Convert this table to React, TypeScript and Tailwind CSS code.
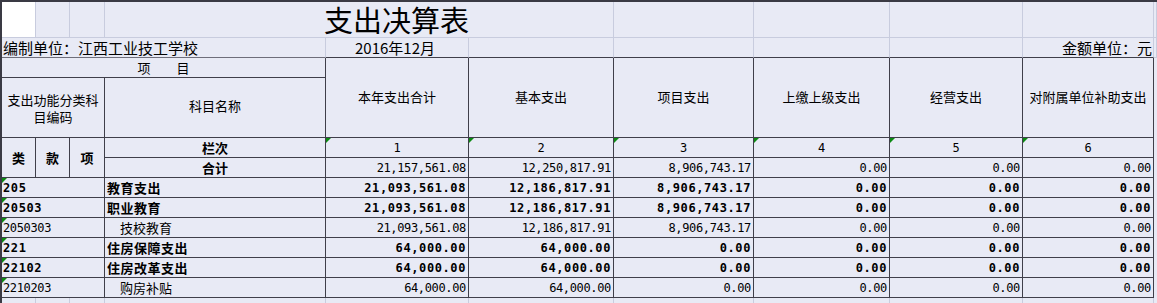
const cjk = "font-['Noto_Sans_CJK_SC',sans-serif]";
const num = "font-['DejaVu_Sans_Mono',monospace] text-[12px] leading-none";

const D = 'border-[#3f3f4a]';
const L = 'border-[#c8ccde]';

const valCols = ['col-start-5', 'col-start-6', 'col-start-7', 'col-start-8', 'col-start-9', 'col-start-10'];
const rowStarts = ['row-start-7', 'row-start-8', 'row-start-9', 'row-start-10', 'row-start-11', 'row-start-12'];

const edu = ['21,093,561.08', '12,186,817.91', '8,906,743.17', '0.00', '0.00', '0.00'];
const house = ['64,000.00', '64,000.00', '0.00', '0.00', '0.00', '0.00'];

const rows = [
  { code: '205', name: '教育支出', bold: true, v: edu },
  { code: '20503', name: '职业教育', bold: true, v: edu },
  { code: '2050303', name: '技校教育', bold: false, v: edu },
  { code: '221', name: '住房保障支出', bold: true, v: house },
  { code: '22102', name: '住房改革支出', bold: true, v: house },
  { code: '2210203', name: '购房补贴', bold: false, v: house },
];

const heads = ['本年支出合计', '基本支出', '项目支出', '上缴上级支出', '经营支出', '对附属单位补助支出'];
const total = ['21,157,561.08', '12,250,817.91', '8,906,743.17', '0.00', '0.00', '0.00'];

function Mark() {
  return <span className="absolute left-0 top-0 h-0 w-0 border-t-[5px] border-r-[5px] border-t-[#0b8a12] border-r-transparent" />;
}

function Cell({ cls, children }: { cls: string; children?: React.ReactNode }) {
  return <div className={`relative flex min-w-0 items-center border-r border-b ${cls}`}>{children}</div>;
}

export default function App() {
  return (
    <div className="h-[303px] w-[1157px] overflow-hidden bg-[#e8eaf5] text-black">
      <div className="grid border-t-2 border-l-2 border-[#3a3a44] grid-cols-[34px_34px_35px_221px_143px_145px_140px_136px_133px_131px_1fr] grid-rows-[36px_20px_20px_60px_20px_20px_20px_20px_20px_20px_20px_20px_20px]">
        {/* title row */}
        <Cell cls={`col-start-1 row-start-1 bg-white ${L}`} />
        <Cell cls={`col-start-2 row-start-1 ${L}`} />
        <Cell cls={`col-start-3 row-start-1 ${L}`} />
        <Cell cls={`col-start-4 col-span-3 row-start-1 ${L}`}>
          <span className={`${cjk} whitespace-nowrap pl-[219px] text-[29px] leading-[29px]`}>支出决算表</span>
        </Cell>
        <Cell cls={`col-start-7 row-start-1 ${L}`} />
        <Cell cls={`col-start-8 row-start-1 ${L}`} />
        <Cell cls={`col-start-9 row-start-1 ${L}`} />
        <Cell cls={`col-start-10 row-start-1 ${L}`} />
        <Cell cls={`col-start-11 row-start-1 ${L}`} />

        {/* unit row */}
        <Cell cls={`col-start-1 col-span-4 row-start-2 border-r-[#c8ccde] border-b-[#6e6e7a]`}>
          <span className={`${cjk} whitespace-nowrap pl-[1px] text-[15px] leading-[17px]`}>编制单位：江西工业技工学校</span>
        </Cell>
        <Cell cls={`col-start-5 row-start-2 border-r-[#c8ccde] border-b-[#3f3f4a]`}>
          <span className={`${cjk} whitespace-nowrap pl-[29px] text-[15px] leading-[17px]`}>2016年12月</span>
        </Cell>
        <Cell cls={`col-start-6 row-start-2 border-r-[#c8ccde] border-b-[#3f3f4a]`} />
        <Cell cls={`col-start-7 row-start-2 border-r-[#c8ccde] border-b-[#3f3f4a]`} />
        <Cell cls={`col-start-8 row-start-2 border-r-[#c8ccde] border-b-[#3f3f4a]`} />
        <Cell cls={`col-start-9 row-start-2 border-r-[#c8ccde] border-b-[#3f3f4a]`} />
        <Cell cls={`col-start-10 row-start-2 justify-end border-r-[#c8ccde] border-b-[#3f3f4a]`}>
          <span className={`${cjk} whitespace-nowrap pr-[1px] text-[15px] leading-[17px]`}>金额单位：元</span>
        </Cell>
        <Cell cls={`col-start-11 row-start-2 ${L}`} />

        {/* header */}
        <Cell cls={`col-start-1 col-span-4 row-start-3 justify-center gap-[26px] ${D}`}>
          <span className={`${cjk} text-[13px] leading-[16px]`}>项</span>
          <span className={`${cjk} text-[13px] leading-[16px]`}>目</span>
        </Cell>
        {heads.map((h, i) => (
          <Cell key={h} cls={`${valCols[i]} row-start-3 row-span-2 justify-center ${D}`}>
            <span className={`${cjk} whitespace-nowrap pb-[2px] text-[13px] leading-[16px]`}>{h}</span>
          </Cell>
        ))}
        <Cell cls={`col-start-11 row-start-3 row-span-10 border-r-0 border-b-0`} />
        <Cell cls={`col-start-1 col-span-3 row-start-4 justify-center ${D}`}>
          <span className={`${cjk} min-w-0 whitespace-normal break-all px-[4px] text-center text-[13px] leading-[17px]`}>支出功能分类科目编码</span>
        </Cell>
        <Cell cls={`col-start-4 row-start-4 justify-center ${D}`}>
          <span className={`${cjk} whitespace-nowrap pb-[3px] text-[13px] leading-[16px]`}>科目名称</span>
        </Cell>

        {/* 类 款 项 */}
        <Cell cls={`col-start-1 row-start-5 row-span-2 justify-center ${D}`}>
          <span className={`${cjk} text-[13px] font-bold leading-[16px]`}>类</span>
        </Cell>
        <Cell cls={`col-start-2 row-start-5 row-span-2 justify-center ${D}`}>
          <span className={`${cjk} text-[13px] font-bold leading-[16px]`}>款</span>
        </Cell>
        <Cell cls={`col-start-3 row-start-5 row-span-2 justify-center ${D}`}>
          <span className={`${cjk} text-[13px] font-bold leading-[16px]`}>项</span>
        </Cell>
        <Cell cls={`col-start-4 row-start-5 justify-center ${D}`}>
          <span className={`${cjk} text-[13px] font-bold leading-[16px]`}>栏次</span>
        </Cell>
        {valCols.map((c, i) => (
          <Cell key={c} cls={`${c} row-start-5 justify-center ${D}`}>
            <Mark />
            <span className={num}>{i + 1}</span>
          </Cell>
        ))}
        <Cell cls={`col-start-4 row-start-6 justify-center ${D}`}>
          <span className={`${cjk} text-[13px] font-bold leading-[16px]`}>合计</span>
        </Cell>
        {total.map((t, i) => (
          <Cell key={valCols[i]} cls={`${valCols[i]} row-start-6 justify-end ${D}`}>
            <span className={`${num} whitespace-nowrap pr-[2px] tracking-[-0.35px]`}>{t}</span>
          </Cell>
        ))}

        {/* data rows */}
        {rows.map((r, ri) => (
          <div key={r.code} className="contents">
            <Cell cls={`col-start-1 col-span-3 ${rowStarts[ri]} ${D}`}>
              <Mark />
              <span className={`${num} pl-[1px] ${r.bold ? 'font-bold tracking-[0.6px]' : 'tracking-[-0.35px]'}`}>{r.code}</span>
            </Cell>
            <Cell cls={`col-start-4 ${rowStarts[ri]} ${D}`}>
              <span className={`${cjk} whitespace-nowrap text-[13px] leading-[16px] ${r.bold ? 'pl-[2px] font-bold tracking-[0.5px]' : 'pl-[15px]'}`}>{r.name}</span>
            </Cell>
            {r.v.map((v, i) => (
              <Cell key={valCols[i]} cls={`${valCols[i]} ${rowStarts[ri]} justify-end ${D}`}>
                <span className={`${num} whitespace-nowrap pr-[2px] ${r.bold ? 'font-bold tracking-[0.6px]' : 'tracking-[-0.35px]'}`}>{v}</span>
              </Cell>
            ))}
          </div>
        ))}

        {/* empty row below */}
        <Cell cls={`col-start-1 row-start-13 ${L}`} />
        <Cell cls={`col-start-2 row-start-13 ${L}`} />
        <Cell cls={`col-start-3 row-start-13 ${L}`} />
        <Cell cls={`col-start-4 row-start-13 ${L}`} />
        <Cell cls={`col-start-5 row-start-13 ${L}`} />
        <Cell cls={`col-start-6 row-start-13 ${L}`} />
        <Cell cls={`col-start-7 row-start-13 ${L}`} />
        <Cell cls={`col-start-8 row-start-13 ${L}`} />
        <Cell cls={`col-start-9 row-start-13 ${L}`} />
        <Cell cls={`col-start-10 row-start-13 ${L}`} />
      </div>
    </div>
  );
}
